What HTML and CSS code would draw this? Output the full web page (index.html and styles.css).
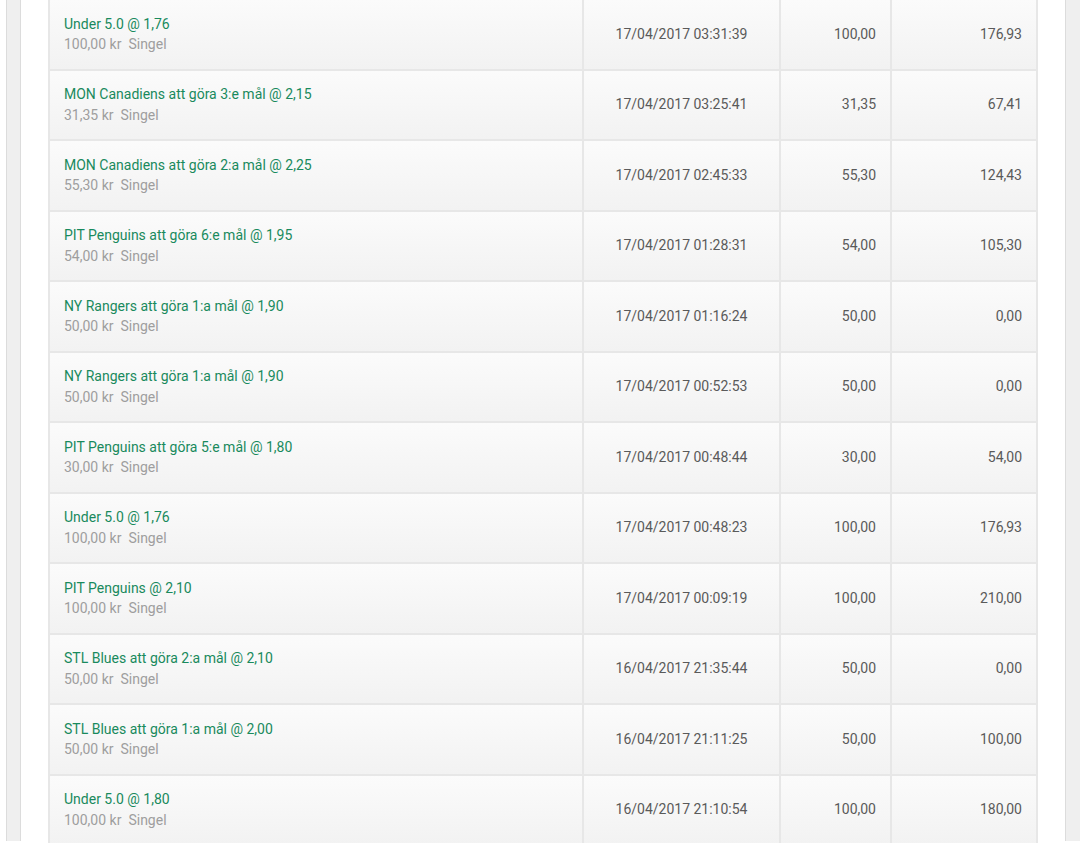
FILE: index.html
```html
<!DOCTYPE html>
<html lang="sv">
<head>
<meta charset="utf-8">
<title>Spelhistorik</title>
<link rel="stylesheet" href="styles.css">
</head>
<body>
<div class="outer">
  <div class="inner">
    <table class="bets">
      <colgroup>
        <col class="c-bet"><col class="c-date"><col class="c-stake"><col class="c-win">
      </colgroup>
      <tbody>
        <tr><td class="bet"><div class="title">Under 5.0 @ 1,76</div><div class="sub">100,00 kr<span class="type">Singel</span></div></td><td class="date">17/04/2017 03:31:39</td><td class="num">100,00</td><td class="num">176,93</td></tr>
        <tr><td class="bet"><div class="title">MON Canadiens att göra 3:e mål @ 2,15</div><div class="sub">31,35 kr<span class="type">Singel</span></div></td><td class="date">17/04/2017 03:25:41</td><td class="num">31,35</td><td class="num">67,41</td></tr>
        <tr><td class="bet"><div class="title">MON Canadiens att göra 2:a mål @ 2,25</div><div class="sub">55,30 kr<span class="type">Singel</span></div></td><td class="date">17/04/2017 02:45:33</td><td class="num">55,30</td><td class="num">124,43</td></tr>
        <tr><td class="bet"><div class="title">PIT Penguins att göra 6:e mål @ 1,95</div><div class="sub">54,00 kr<span class="type">Singel</span></div></td><td class="date">17/04/2017 01:28:31</td><td class="num">54,00</td><td class="num">105,30</td></tr>
        <tr><td class="bet"><div class="title">NY Rangers att göra 1:a mål @ 1,90</div><div class="sub">50,00 kr<span class="type">Singel</span></div></td><td class="date">17/04/2017 01:16:24</td><td class="num">50,00</td><td class="num">0,00</td></tr>
        <tr><td class="bet"><div class="title">NY Rangers att göra 1:a mål @ 1,90</div><div class="sub">50,00 kr<span class="type">Singel</span></div></td><td class="date">17/04/2017 00:52:53</td><td class="num">50,00</td><td class="num">0,00</td></tr>
        <tr><td class="bet"><div class="title">PIT Penguins att göra 5:e mål @ 1,80</div><div class="sub">30,00 kr<span class="type">Singel</span></div></td><td class="date">17/04/2017 00:48:44</td><td class="num">30,00</td><td class="num">54,00</td></tr>
        <tr><td class="bet"><div class="title">Under 5.0 @ 1,76</div><div class="sub">100,00 kr<span class="type">Singel</span></div></td><td class="date">17/04/2017 00:48:23</td><td class="num">100,00</td><td class="num">176,93</td></tr>
        <tr><td class="bet"><div class="title">PIT Penguins @ 2,10</div><div class="sub">100,00 kr<span class="type">Singel</span></div></td><td class="date">17/04/2017 00:09:19</td><td class="num">100,00</td><td class="num">210,00</td></tr>
        <tr><td class="bet"><div class="title">STL Blues att göra 2:a mål @ 2,10</div><div class="sub">50,00 kr<span class="type">Singel</span></div></td><td class="date">16/04/2017 21:35:44</td><td class="num">50,00</td><td class="num">0,00</td></tr>
        <tr><td class="bet"><div class="title">STL Blues att göra 1:a mål @ 2,00</div><div class="sub">50,00 kr<span class="type">Singel</span></div></td><td class="date">16/04/2017 21:11:25</td><td class="num">50,00</td><td class="num">100,00</td></tr>
        <tr><td class="bet"><div class="title">Under 5.0 @ 1,80</div><div class="sub">100,00 kr<span class="type">Singel</span></div></td><td class="date">16/04/2017 21:10:54</td><td class="num">100,00</td><td class="num">180,00</td></tr>
      </tbody>
    </table>
  </div>
</div>
</body>
</html>
```
FILE: styles.css
```css
html, body {
  margin: 0;
  padding: 0;
  background: #ffffff;
  font-family: Roboto, "Liberation Sans", Arial, sans-serif;
  font-size: 14px;
  overflow: hidden;
}

body {
  padding-left: 6px;
  height: 843px;
}

.outer {
  height: 100%;
  background: #efefef;
  border-left: 1px solid #dcdcdc;
  padding-left: 13px;
}

.inner {
  height: 100%;
  width: 1046px;
  background: #ffffff;
  border-left: 1px solid #dcdcdc;
  border-right: 1px solid #dcdcdc;
  padding-left: 27px;
  box-sizing: border-box;
}

.bets {
  border-collapse: collapse;
  width: 988px;
  table-layout: fixed;
  margin-top: -2px;
}

.c-bet { width: 534px; }
.c-date { width: 197px; }
.c-stake { width: 111px; }
.c-win { width: 146px; }

.bets tr {
  height: 70.5px;
}

.bets td {
  border: 2px solid #e7e7e7;
  background: linear-gradient(#fbfbfb, #f2f2f2);
  vertical-align: middle;
  padding: 0 14px;
  color: #5a5a5a;
}

.bet {
  padding-left: 14px !important;
  padding-bottom: 1px !important;
}

.title {
  color: #198a5d;
  line-height: 20.5px;
  padding-top: 1px;
}

.sub {
  color: #9e9e9e;
  line-height: 20.5px;
}

.type {
  margin-left: 7px;
}

.date {
  text-align: center;
  color: #8c8c8c;
  padding-bottom: 1px !important;
}

.num {
  text-align: right;
  padding-bottom: 1px !important;
}
```
